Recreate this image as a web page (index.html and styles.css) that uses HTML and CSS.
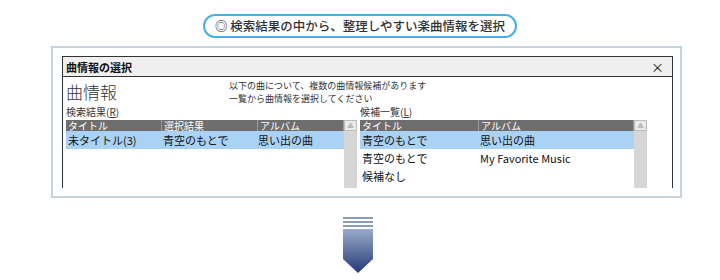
FILE: index.html
```html
<!DOCTYPE html>
<html>

<head>
    <title>曲情報の選択</title>
    <link rel="stylesheet" href="styles.css">
</head>

<body>
    <div class="caption">
        <span class="pill">◎ 検索結果の中から、整理しやすい楽曲情報を選択</span>
    </div>

    <div class="frame">
        <div class="dialog">
            <div class="titlebar">
                <span>曲情報の選択</span>
                <span class="close">×</span>
            </div>
            <div class="body">
                <div class="intro">
                    <div class="big">曲情報</div>
                    <div class="msg">
                        <div>以下の曲について、複数の曲情報候補があります</div>
                        <div>一覧から曲情報を選択してください</div>
                    </div>
                </div>
                <div class="panes">
                    <div class="pane">
                        <div class="label">検索結果(<u>R</u>)</div>
                        <div class="list">
                            <div class="cols">
                                <div class="row head">
                                    <span class="c1">タイトル</span>
                                    <span class="c2">選択結果</span>
                                    <span class="c3">アルバム</span>
                                </div>
                                <div class="row sel">
                                    <span class="c1">未タイトル(3)</span>
                                    <span class="c2">青空のもとで</span>
                                    <span class="c3">思い出の曲</span>
                                </div>
                            </div>
                            <div class="scroll"><div class="btn">▲</div></div>
                        </div>
                    </div>
                    <div class="pane">
                        <div class="label">候補一覧(<u>L</u>)</div>
                        <div class="list">
                            <div class="cols">
                                <div class="row head">
                                    <span class="w1">タイトル</span>
                                    <span class="w2">アルバム</span>
                                </div>
                                <div class="row sel">
                                    <span class="w1">青空のもとで</span>
                                    <span class="w2">思い出の曲</span>
                                </div>
                                <div class="row">
                                    <span class="w1">青空のもとで</span>
                                    <span class="w2">My Favorite Music</span>
                                </div>
                                <div class="row">
                                    <span class="w1">候補なし</span>
                                </div>
                            </div>
                            <div class="scroll"><div class="btn">▲</div></div>
                        </div>
                    </div>
                </div>
            </div>
        </div>
    </div>

    <div class="arrow">
        <svg width="30" height="58" viewBox="0 0 30 58">
            <defs>
                <linearGradient id="g" x1="0" y1="0" x2="0" y2="1">
                    <stop offset="0" stop-color="#9aabc8"/>
                    <stop offset="1" stop-color="#243a78"/>
                </linearGradient>
            </defs>
            <rect x="0" y="0" width="30" height="2" fill="#8c9cbc"/>
            <rect x="0" y="4" width="30" height="2" fill="#8c9cbc"/>
            <rect x="0" y="8" width="30" height="2" fill="#8c9cbc"/>
            <polygon points="0,12 30,12 30,42 15,56 0,42" fill="url(#g)"/>
        </svg>
    </div>
</body>

</html>
```

FILE: styles.css
```css
body {
    margin: 0;
    background-color: white;
    font-family: 'Noto Sans CJK JP', 'Liberation Sans', sans-serif;
    color: #222;
}

.caption {
    padding-top: 12px;
    text-align: center;
    height: 24px;
}

.pill {
    display: inline-block;
    box-sizing: border-box;
    width: 314px;
    height: 24px;
    line-height: 20px;
    border: 2px solid #45aee8;
    border-radius: 12px;
    font-size: 12.5px;
    font-weight: 500;
    white-space: nowrap;
    color: #333;
}

.frame {
    margin: 10px 0 0 51px;
    width: 611px;
    border: 2px solid #c7d3dc;
    padding: 8px 7px 8px 9px;
}

.dialog {
    border: 1px solid #333;
    border-bottom: none;
    height: 131px;
    overflow: hidden;
}

.titlebar {
    height: 19px;
    background-color: #efefef;
    border-bottom: 1px solid #333;
    display: flex;
    justify-content: space-between;
    align-items: center;
    padding: 0 8px 0 3px;
    font-size: 11px;
    font-weight: bold;
    color: #111;
}

.close {
    font-weight: normal;
    font-size: 13px;
}

.body {
    padding: 3px 4px 0 3px;
}

.intro {
    display: flex;
    height: 26px;
}

.big {
    width: 163px;
    font-size: 17px;
    font-weight: 300;
    line-height: 24px;
    color: #333;
}

.msg {
    margin-top: -1px;
    font-size: 9px;
    line-height: 13px;
    color: #333;
}

.panes {
    display: flex;
    gap: 3px;
}

.pane {
    width: 291px;
}

.label {
    font-size: 10px;
    line-height: 12px;
    height: 14px;
    color: #333;
}

.list {
    display: flex;
    height: 68px;
}

.cols {
    flex: 1;
}

.row {
    display: flex;
    height: 18px;
    line-height: 18px;
    font-size: 11px;
    color: #111;
}

.row span {
    padding-left: 2px;
}

.row.head {
    height: 11px;
    line-height: 11px;
    background-color: #6e6e6e;
    color: white;
    font-size: 10px;
}

.row.head span {
    border-right: 1px solid #9a9a9a;
}

.row.sel {
    background-color: #a9d2f4;
}

.c1 {
    width: 93px;
}

.c2 {
    width: 93px;
}

.c3 {
    flex: 1;
}

.w1 {
    width: 116px;
}

.w2 {
    flex: 1;
}

.scroll {
    width: 13px;
    background-color: #d6d6d6;
}

.btn {
    height: 11px;
    background-color: #eaeaea;
    border: 1px solid #bdbdbd;
    box-sizing: border-box;
    font-size: 7px;
    line-height: 9px;
    text-align: center;
    color: #bbb;
}

.pane + .pane .scroll {
    margin-right: 4px;
}

.arrow {
    margin: 19px 0 0 343px;
    width: 30px;
}
```
